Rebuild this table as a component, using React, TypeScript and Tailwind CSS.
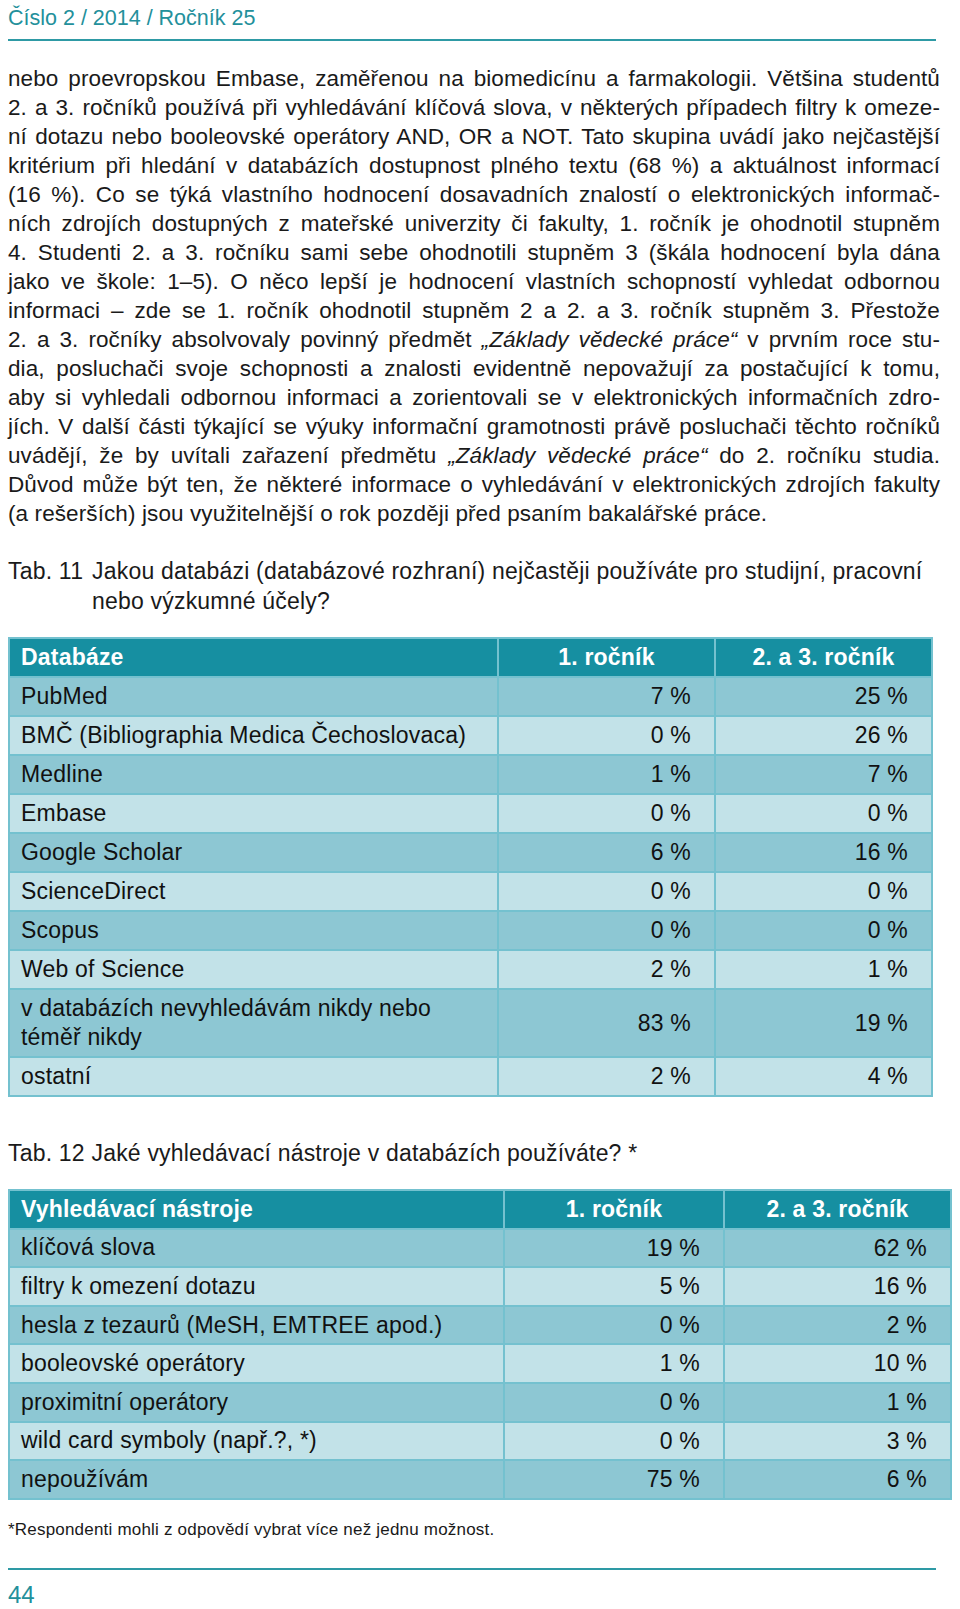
import React from "react";

const font = { fontFamily: '"Liberation Sans", Arial, sans-serif' };

const lines: React.ReactNode[] = [
  "nebo proevropskou Embase, zaměřenou na biomedicínu a farmakologii. Většina studentů",
  "2. a 3. ročníků používá při vyhledávání klíčová slova, v některých případech filtry k omeze-",
  "ní dotazu nebo booleovské operátory AND, OR a NOT. Tato skupina uvádí jako nejčastější",
  "kritérium při hledání v databázích dostupnost plného textu (68 %) a aktuálnost informací",
  "(16 %). Co se týká vlastního hodnocení dosavadních znalostí o elektronických informač-",
  "ních zdrojích dostupných z mateřské univerzity či fakulty, 1. ročník je ohodnotil stupněm",
  "4. Studenti 2. a 3. ročníku sami sebe ohodnotili stupněm 3 (škála hodnocení byla dána",
  "jako ve škole: 1–5). O něco lepší je hodnocení vlastních schopností vyhledat odbornou",
  "informaci – zde se 1. ročník ohodnotil stupněm 2 a 2. a 3. ročník stupněm 3. Přestože",
  <>
    2. a 3. ročníky absolvovaly povinný předmět <i>„Základy vědecké práce“</i> v prvním roce stu-
  </>,
  "dia, posluchači svoje schopnosti a znalosti evidentně nepovažují za postačující k tomu,",
  "aby si vyhledali odbornou informaci a zorientovali se v elektronických informačních zdro-",
  "jích. V další části týkající se výuky informační gramotnosti právě posluchači těchto ročníků",
  <>
    uvádějí, že by uvítali zařazení předmětu <i>„Základy vědecké práce“</i> do 2. ročníku studia.
  </>,
  "Důvod může být ten, že některé informace o vyhledávání v elektronických zdrojích fakulty",
];
const lastLine = "(a rešerších) jsou využitelnější o rok později před psaním bakalářské práce.";

type Row = { label: React.ReactNode; a: string; b: string; tall?: boolean };

const table1: Row[] = [
  { label: "PubMed", a: "7 %", b: "25 %" },
  { label: "BMČ (Bibliographia Medica Čechoslovaca)", a: "0 %", b: "26 %" },
  { label: "Medline", a: "1 %", b: "7 %" },
  { label: "Embase", a: "0 %", b: "0 %" },
  { label: "Google Scholar", a: "6 %", b: "16 %" },
  { label: "ScienceDirect", a: "0 %", b: "0 %" },
  { label: "Scopus", a: "0 %", b: "0 %" },
  { label: "Web of Science", a: "2 %", b: "1 %" },
  {
    label: (
      <>
        v databázích nevyhledávám nikdy nebo
        <br />
        téměř nikdy
      </>
    ),
    a: "83 %",
    b: "19 %",
    tall: true,
  },
  { label: "ostatní", a: "2 %", b: "4 %" },
];

const table2: Row[] = [
  { label: "klíčová slova", a: "19 %", b: "62 %" },
  { label: "filtry k omezení dotazu", a: "5 %", b: "16 %" },
  { label: "hesla z tezaurů (MeSH, EMTREE apod.)", a: "0 %", b: "2 %" },
  { label: "booleovské operátory", a: "1 %", b: "10 %" },
  { label: "proximitní operátory", a: "0 %", b: "1 %" },
  { label: "wild card symboly (např.?, *)", a: "0 %", b: "3 %" },
  { label: "nepoužívám", a: "75 %", b: "6 %" },
];

function DataTable({
  head,
  rows,
  cols,
  width,
  rowH,
}: {
  head: string;
  rows: Row[];
  cols: string;
  width: string;
  rowH: string;
}) {
  return (
    <div
      className={`grid ${cols} ${width} gap-[2px] border-2 border-[#74c1cf] bg-[#74c1cf] text-[23px] tracking-[0.2px] text-[#111]`}
    >
      <div className={`${rowH} flex items-center bg-[#168fa1] pl-[11px] font-bold text-white`}>{head}</div>
      <div className={`${rowH} flex items-center justify-center bg-[#168fa1] font-bold text-white`}>1. ročník</div>
      <div className={`${rowH} flex items-center justify-center bg-[#168fa1] font-bold text-white`}>2. a 3. ročník</div>
      {rows.map((r, i) => {
        const bg = i % 2 === 0 ? "bg-[#8dc7d3]" : "bg-[#c2e2e8]";
        const h = r.tall ? "h-[66px]" : rowH;
        return (
          <React.Fragment key={i}>
            <div className={`${h} ${bg} flex items-center pl-[11px] leading-[29px]`}>
              <div>{r.label}</div>
            </div>
            <div className={`${h} ${bg} flex items-center justify-end pr-[23px]`}>{r.a}</div>
            <div className={`${h} ${bg} flex items-center justify-end pr-[23px]`}>{r.b}</div>
          </React.Fragment>
        );
      })}
    </div>
  );
}

export default function App() {
  return (
    <div className="w-[960px] min-h-[1609px] bg-white px-[8px] text-[#1a1a1a]" style={font}>
      <div className="pt-[6px] text-[21.5px] leading-[25px] text-[#23909b]">Číslo 2 / 2014 / Ročník 25</div>
      <div className="mt-[8px] h-[2px] w-[928px] bg-[#2e9aa5]" />

      <div className="mt-[23px] w-[932px] text-[22.5px] leading-[29px] tracking-[0.1px]">
        {lines.map((l, i) => (
          <div key={i} className="text-justify [text-align-last:justify]">
            {l}
          </div>
        ))}
        <div>{lastLine}</div>
      </div>

      <div className="mt-[28px] flex text-[23px] leading-[30px] tracking-[0.2px]">
        <div className="w-[84px] shrink-0">Tab. 11</div>
        <div>
          Jakou databázi (databázové rozhraní) nejčastěji používáte pro studijní, pracovní
          <br />
          nebo výzkumné účely?
        </div>
      </div>

      <div className="mt-[21px]">
        <DataTable
          head="Databáze"
          rows={table1}
          cols="grid-cols-[487px_215px_215px]"
          width="w-[925px]"
          rowH="h-[37px]"
        />
      </div>

      <div className="mt-[41px] text-[23px] leading-[30px] tracking-[0.2px]">
        Tab. 12 Jaké vyhledávací nástroje v databázích používáte? *
      </div>

      <div className="mt-[21px]">
        <DataTable
          head="Vyhledávací nástroje"
          rows={table2}
          cols="grid-cols-[493px_218px_225px]"
          width="w-[944px]"
          rowH="h-[36.6px]"
        />
      </div>

      <div className="mt-[19px] text-[17px] leading-[22px] tracking-[0.2px]">
        *Respondenti mohli z odpovědí vybrat více než jednu možnost.
      </div>
      <div className="mt-[27px] h-[2px] w-[928px] bg-[#2e9aa5]" />
      <div className="mt-[11px] text-[24px] leading-[28px] text-[#23909b]">44</div>
    </div>
  );
}
